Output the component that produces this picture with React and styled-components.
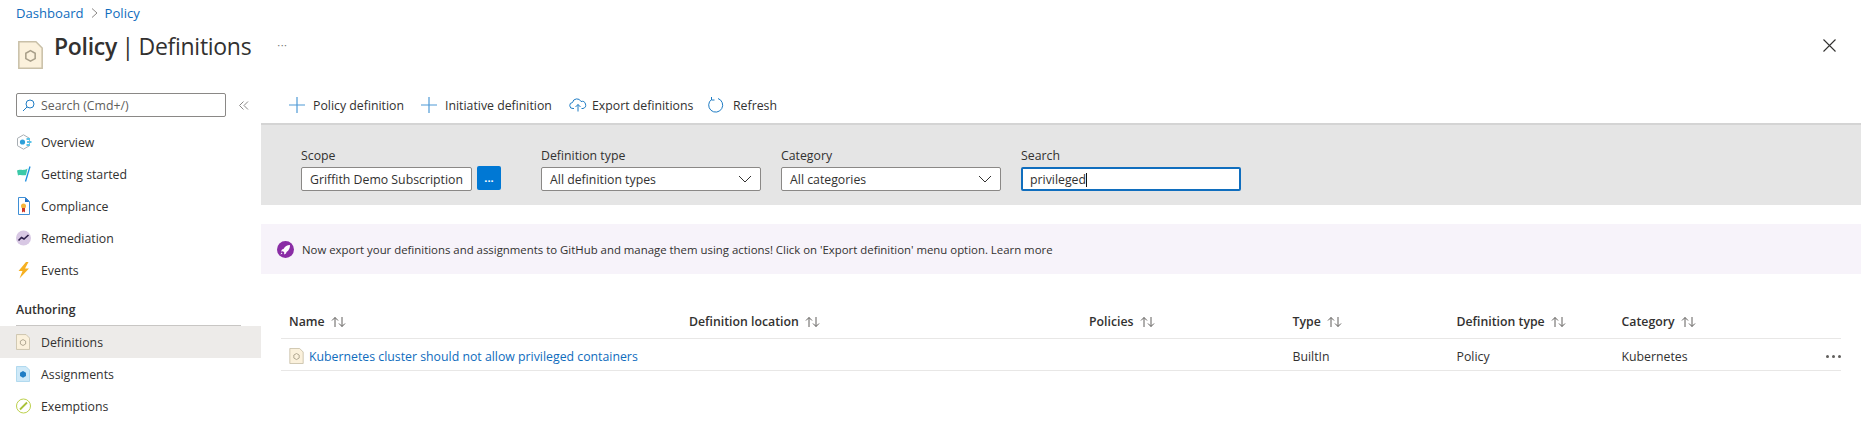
import React from "react";
import styled, { createGlobalStyle } from "styled-components";

const Global = createGlobalStyle`
  html, body { margin: 0; padding: 0; background: #fff; }
  body { font-family: "Open Sans", "Noto Sans", sans-serif; font-size: 12.3px; color: #323130; overflow: hidden; }
  * { box-sizing: border-box; }
`;

const Page = styled.div`
  width: 1861px;
  height: 424px;
  overflow: hidden;
  display: flex;
  flex-direction: column;
`;
const Breadcrumb = styled.nav`
  flex: none;
  height: 24px;
  padding: 2px 0 0 16px;
  display: flex;
  align-items: center;
  gap: 7px;
  font-size: 13.1px;
  color: #0f6cbd;
`;
const Header = styled.header`
  flex: none;
  height: 45px;
  padding: 0 25px 0 18px;
  display: flex;
  align-items: flex-start;
`;
const HeaderIcon = styled.div`
  width: 36px;
  padding-top: 17px;
  display: flex;
`;
const Title = styled.h1`
  margin: 0;
  font-size: 23px;
  line-height: 44px;
  font-weight: 400;
  color: #323130;
  letter-spacing: -0.3px;
  word-spacing: -1px;
  b { font-weight: 600; }
`;
const More = styled.span`
  margin: 4px 0 0 26px;
  line-height: 34px;
  font-size: 11px;
  letter-spacing: 0.5px;
  color: #777;
`;
const Close = styled.div`
  margin-left: auto;
  padding-top: 15px;
  display: flex;
`;
const Body = styled.div`
  flex: 1;
  display: grid;
  grid-template-columns: 261px 1fr;
  padding-top: 24px;
`;
const Sidebar = styled.aside`
  display: flex;
  flex-direction: column;
`;
const SearchRow = styled.div`
  height: 33px;
  padding-left: 16px;
  display: flex;
  align-items: flex-start;
`;
const SideSearch = styled.div`
  width: 210px;
  height: 24px;
  border: 1px solid #8a8886;
  border-radius: 2px;
  padding-left: 5px;
  display: flex;
  align-items: center;
  gap: 6px;
  color: #605e5c;
`;
const Collapse = styled.span`
  margin-left: 13px;
  display: flex;
  align-items: center;
  height: 24px;
`;
const NavItem = styled.div`
  height: 32px;
  padding-left: 16px;
  display: flex;
  align-items: center;
  gap: 9px;
  background: ${p => (p.$active ? "#edebe9" : "transparent")};
`;
const NavIcon = styled.span`
  width: 16px;
  height: 16px;
  display: flex;
  align-items: center;
`;
const GroupTitle = styled.div`
  margin: 16px 20px 0 16px;
  height: 24px;
  line-height: 15px;
  font-weight: 600;
  border-bottom: 1px solid #c8c6c4;
`;
const Main = styled.main`
  display: flex;
  flex-direction: column;
`;
const Toolbar = styled.div`
  height: 30px;
  margin-left: 20px;
  padding-left: 8px;
  display: flex;
  align-items: flex-start;
`;
const ToolButton = styled.div`
  width: ${p => p.$w}px;
  height: 24px;
  display: flex;
  align-items: center;
  gap: ${p => p.$gap}px;
`;
const Filters = styled.section`
  height: 82px;
  background: #e5e5e5;
  border-top: 2px solid #d4d4d4;
  padding: 22px 0 0 40px;
  display: flex;
  align-items: flex-start;
`;
const Field = styled.div`
  width: ${p => p.$w}px;
  margin-right: ${p => p.$mr}px;
  display: flex;
  flex-direction: column;
  gap: 3px;
`;
const FieldLabel = styled.label`
  height: 17px;
  line-height: 17px;
`;
const InputRow = styled.div`
  display: flex;
  gap: 5px;
`;
const Input = styled.div`
  width: ${p => p.$w || "100%"};
  height: 24px;
  background: #fff;
  border: ${p => (p.$focus ? "2px solid #106ebe" : "1px solid #8a8886")};
  border-radius: 2px;
  padding: 0 ${p => (p.$focus ? 7 : 8)}px;
  display: flex;
  align-items: center;
  justify-content: space-between;
  white-space: nowrap;
  overflow: hidden;
`;
const Caret = styled.span`
  display: inline-block;
  vertical-align: middle;
  width: 1px;
  height: 14px;
  background: #111;
`;
const DotsButton = styled.div`
  width: 24px;
  height: 24px;
  margin-top: -1px;
  background: #0078d4;
  border-radius: 2px;
  color: #fff;
  font-weight: 700;
  font-size: 11px;
  line-height: 24px;
  text-align: center;
`;
const Notice = styled.div`
  height: 50px;
  margin-top: 19px;
  background: #f7f3fa;
  padding-left: 16px;
  display: flex;
  align-items: center;
  gap: 8px;
  font-size: 11.4px;
`;
const TableWrap = styled.div`
  margin: 31px 20px 0 20px;
`;
const Row = styled.div`
  display: grid;
  grid-template-columns: 400px 400px 203.5px 164px 165px 1fr 20px;
  align-items: center;
  padding: ${p => p.$pt || 0}px 0 0 8px;
  height: ${p => p.$h}px;
  border-bottom: 1px solid #e8e7e6;
`;
const HeadCell = styled.div`
  font-weight: 600;
  display: flex;
  align-items: center;
  gap: 5px;
`;
const LinkCell = styled.div`
  display: flex;
  align-items: center;
  gap: 5px;
  color: #0f6cbd;
`;
const RowMore = styled.div`
  display: flex;
  justify-content: flex-end;
  gap: 3px;
`;
const Dot = styled.i`
  width: 3px;
  height: 3px;
  border-radius: 50%;
  flex: none;
  background: #605e5c;
`;

const Sort = () => (
  <svg width="18" height="12" viewBox="0 0 18 12" fill="none" stroke="#605e5c" strokeWidth="1">
    <path d="M5 11V1.5M2 4.5l3-3 3 3M12 1v9.5M9 7.5l3 3 3-3" />
  </svg>
);
const Plus = () => (
  <svg width="16" height="16" viewBox="0 0 16 16" stroke="#4f9ad6" strokeWidth="1.2">
    <path d="M8 0v16M0 8h16" />
  </svg>
);
const Chevron = () => (
  <svg width="14" height="8" viewBox="0 0 14 8" fill="none" stroke="#323130" strokeWidth="1">
    <path d="M1 1l6 6 6-6" />
  </svg>
);
const PolicyDoc = ({ w = 16, h = 18 }) => (
  <svg width={w} height={h} viewBox="0 0 16 18">
    <path d="M.5.5h11l4 4v13H.5z" fill="#fbf1dc" stroke="#c9c0a8" />
    <path d="M8 6.2l3 1.7v3.4l-3 1.7-3-1.7V7.9z" fill="none" stroke="#a89f8a" />
  </svg>
);
const Icons = {
  overview: (
    <svg width="16" height="16" viewBox="0 0 16 16">
      <path d="M7.500.800l6 3.500v7.400l-6 3.500-6-3.500V4.300z" fill="none" stroke="#a8aeb3" />
      <circle cx="6.500" cy="8" r="2.600" fill="#2f9fd8" />
      <g fill="#5cc3e8"><rect x="10.500" y="4" width="3.500" height="2" /><rect x="11" y="7" width="4.500" height="2" /><rect x="10.500" y="10" width="3.500" height="2" /></g>
    </svg>
  ),
  started: (
    <svg width="16" height="16" viewBox="0 0 16 16">
      <path d="M1 4.500c3-2 6 1 10.500-2L10 9C7 10 5 8 2 9.500z" fill="#3cc9a8" />
      <path d="M14 .5L9.500 15.500" stroke="#1f8fe0" strokeWidth="1.300" />
    </svg>
  ),
  compliance: (
    <svg width="16" height="18" viewBox="0 0 16 18">
      <path d="M2.500.5h7l4 4v13h-11z" fill="#fff" stroke="#3f8fd6" />
      <path d="M9 .5l4.500 4.500H9z" fill="#1f6fc4" />
      <circle cx="7.500" cy="9" r="2.500" fill="#f5b53c" />
      <path d="M6 11h3v4.500l-1.500-1L6 15.500z" fill="#d0392b" />
    </svg>
  ),
  remediation: (
    <svg width="16" height="16" viewBox="0 0 16 16">
      <circle cx="7.500" cy="8" r="7.500" fill="#d8c8e4" />
      <path d="M2.500 10.500l3-3 2.500 1.500L12.500 5" fill="none" stroke="#2d1f4a" strokeWidth="1.600" />
    </svg>
  ),
  events: (
    <svg width="16" height="17" viewBox="0 0 16 17">
      <path d="M10 0L2.500 9h4L3.500 16.500 13 6.500H9L12.500 0z" fill="#f6b021" />
    </svg>
  ),
  assignments: (
    <svg width="14" height="16" viewBox="0 0 16 18">
      <path d="M.5.5h11l4 4v13H.5z" fill="#cfe9f8" stroke="#a6d3ec" />
      <path d="M8 5.500l3.400 2v3.800L8 13.300l-3.400-2V7.500z" fill="#1f7cc4" />
    </svg>
  ),
  exemptions: (
    <svg width="16" height="16" viewBox="0 0 16 16">
      <circle cx="7.500" cy="8" r="7" fill="#fff" stroke="#bcd04a" />
      <path d="M4 11.500l7-7" stroke="#a9c23a" strokeWidth="1.800" />
    </svg>
  ),
};

const navTop = [
  ["overview", "Overview"],
  ["started", "Getting started"],
  ["compliance", "Compliance"],
  ["remediation", "Remediation"],
  ["events", "Events"],
];
const columns = ["Name", "Definition location", "Policies", "Type", "Definition type", "Category"];

export default function App() {
  return (
    <Page>
      <Global />
      <Breadcrumb>
        <span>Dashboard</span>
        <svg width="7" height="10" viewBox="0 0 7 10" fill="none" stroke="#8a8886"><path d="M1 .5l5 4.500-5 4.500" /></svg>
        <span>Policy</span>
      </Breadcrumb>
      <Header>
        <HeaderIcon><PolicyDoc w={25} h={28} /></HeaderIcon>
        <Title><b>Policy</b> | Definitions</Title>
        <More>···</More>
        <Close>
          <svg width="13" height="13" viewBox="0 0 13 13" stroke="#323130" strokeWidth="1.100"><path d="M.5.5l12 12M12.500.5l-12 12" /></svg>
        </Close>
      </Header>
      <Body>
        <Sidebar>
          <SearchRow>
            <SideSearch>
              <svg width="13" height="13" viewBox="0 0 13 13" fill="none" stroke="#1f7cc4"><circle cx="8" cy="5" r="4" /><path d="M5 8l-4 4" /></svg>
              Search (Cmd+/)
            </SideSearch>
            <Collapse>
              <svg width="10" height="9" viewBox="0 0 10 9" fill="none" stroke="#8a8886"><path d="M4.500.5l-4 4 4 4M9 .5l-4 4 4 4" /></svg>
            </Collapse>
          </SearchRow>
          {navTop.map(([k, label]) => (
            <NavItem key={k}><NavIcon>{Icons[k]}</NavIcon>{label}</NavItem>
          ))}
          <GroupTitle>Authoring</GroupTitle>
          <NavItem $active><NavIcon><PolicyDoc w={14} h={16} /></NavIcon>Definitions</NavItem>
          <NavItem><NavIcon>{Icons.assignments}</NavIcon>Assignments</NavItem>
          <NavItem><NavIcon>{Icons.exemptions}</NavIcon>Exemptions</NavItem>
        </Sidebar>
        <Main>
          <Toolbar>
            <ToolButton $w={132} $gap={8}><Plus />Policy definition</ToolButton>
            <ToolButton $w={148} $gap={8}><Plus />Initiative definition</ToolButton>
            <ToolButton $w={138} $gap={5}>
              <svg width="18" height="14" viewBox="0 0 18 14" fill="none" stroke="#1f7cc4"><path d="M5 10.500H4a3 3 0 0 1-.5-6 4.500 4.500 0 0 1 8.500-1 3.500 3.500 0 0 1 2 7h-1.500M9 13.500V6.500M6.500 9L9 6.500 11.500 9" /></svg>
              Export definitions
            </ToolButton>
            <ToolButton $w={80} $gap={8}>
              <svg width="18" height="18" viewBox="0 0 18 18" fill="none" stroke="#1f7cc4"><path d="M11 2.500a7 7 0 1 1-6.500 1M4.500 1v3h3" /></svg>
              Refresh
            </ToolButton>
          </Toolbar>
          <Filters>
            <Field $w={200} $mr={40}>
              <FieldLabel>Scope</FieldLabel>
              <InputRow><Input $w="171px">Griffith Demo Subscription</Input><DotsButton>...</DotsButton></InputRow>
            </Field>
            <Field $w={220} $mr={20}>
              <FieldLabel>Definition type</FieldLabel>
              <Input>All definition types<Chevron /></Input>
            </Field>
            <Field $w={220} $mr={20}>
              <FieldLabel>Category</FieldLabel>
              <Input>All categories<Chevron /></Input>
            </Field>
            <Field $w={220} $mr={0}>
              <FieldLabel>Search</FieldLabel>
              <Input $focus><span>privileged<Caret /></span></Input>
            </Field>
          </Filters>
          <Notice>
            <svg width="17" height="17" viewBox="0 0 17 17">
              <circle cx="8.500" cy="8.500" r="8.500" fill="#8a2da5" />
              <path d="M13 4c-3 0-5 1.500-6.500 4L5 8.500 4 10.500l2-.3L7.300 11.500l-.3 2 2-1 .5-1.500C12 9.500 13 7 13 4zM4.500 11.500L3.500 13.500l2-1z" fill="#fff" />
            </svg>
            Now export your definitions and assignments to GitHub and manage them using actions! Click on 'Export definition' menu option. Learn more
          </Notice>
          <TableWrap>
            <Row $h={34}>
              {columns.map(c => <HeadCell key={c}>{c}<Sort /></HeadCell>)}
            </Row>
            <Row $h={32} $pt={3}>
              <LinkCell><PolicyDoc w={15} h={16} />Kubernetes cluster should not allow privileged containers</LinkCell>
              <div />
              <div />
              <div>BuiltIn</div>
              <div>Policy</div>
              <div>Kubernetes</div>
              <RowMore><Dot /><Dot /><Dot /></RowMore>
            </Row>
          </TableWrap>
        </Main>
      </Body>
    </Page>
  );
}
